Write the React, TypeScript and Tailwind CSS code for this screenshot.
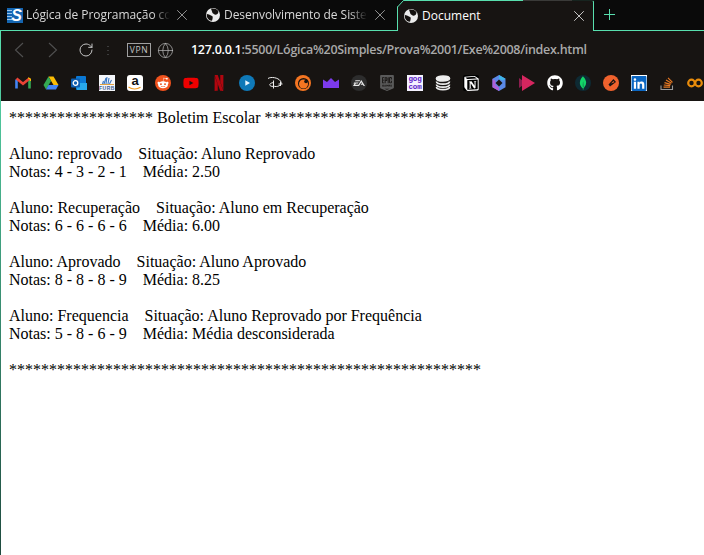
import React from "react";
import { RotateCw, Globe, X } from "lucide-react";
import { FaGithub, FaLinkedin, FaRedditAlien, FaYoutube } from "react-icons/fa";
import { SiNetflix, SiEa, SiEpicgames, SiNotion, SiMongodb } from "react-icons/si";

const Gmail = () => (
  <svg width="16" height="16" viewBox="0 0 16 16" fill="none">
    <path d="M1.500 13.500V4.500" stroke="#4285f4" strokeWidth="2.600" />
    <path d="M14.500 13.500V5" stroke="#34a853" strokeWidth="2.600" />
    <path d="M1.500 3.500L8 8.800l6.500-5.300" stroke="#ea4335" strokeWidth="2.600" />
    <path d="M13.200 2.700l2.200 1.500V6" stroke="#fbbc04" strokeWidth="1.300" />
  </svg>
);
const Drive = () => (
  <svg width="16" height="16" viewBox="0 0 16 16">
    <path d="M5.500 1.500h5L15.500 10h-5z" fill="#fbbc04" />
    <path d="M5.500 1.500L.5 10 3 14.500 8 6z" fill="#34a853" />
    <path d="M3 14.500h10l2.500-4.500H5.500z" fill="#4285f4" />
  </svg>
);
const Outlook = () => (
  <svg width="16" height="16" viewBox="0 0 16 16">
    <rect x="5" y="1" width="10" height="14" rx="1" fill="#0a78d4" />
    <path d="M5 8h11v7H6z" fill="#28a8ea" />
    <rect x="0" y="3.500" width="9" height="9" rx="1" fill="#0f5fb0" />
    <circle cx="4.500" cy="8" r="2.300" fill="none" stroke="#fff" strokeWidth="1.300" />
  </svg>
);
const Furb = () => (
  <div className="flex h-4 w-4 flex-col items-center bg-[#f4f6fa]">
    <svg width="16" height="10" viewBox="0 0 16 10">
      <path d="M5 9L7 3M7 9l1-7M9 9l1-6M10.500 9l2-4M3.500 9l1-3" stroke="#3b78c4" strokeWidth="1.100" />
      <path d="M1 9.500h14" stroke="#e0a040" strokeWidth="1" />
    </svg>
    <span className="font-['Liberation_Sans',sans-serif] text-[5px] font-bold leading-[6px] tracking-[0.5px] text-[#3a5f95]">FURB</span>
  </div>
);
const Amazon = () => (
  <div className="relative flex h-4 w-4 justify-center rounded-[3px] bg-white">
    <span className="font-['Liberation_Sans',sans-serif] text-[13px] font-bold leading-[12px] text-[#111]">a</span>
    <svg className="absolute bottom-0 left-0" width="16" height="5" viewBox="0 0 16 5" fill="none">
      <path d="M1.500 1c3.500 2.500 8.500 2.500 12 .3" stroke="#f29a1f" strokeWidth="1.300" />
    </svg>
  </div>
);
const Reddit = () => (
  <div className="flex h-4 w-4 items-center justify-center rounded-full bg-[#f0521d]">
    <FaRedditAlien className="h-3 w-3 text-white" />
  </div>
);
const Prime = () => (
  <svg width="16" height="16" viewBox="0 0 16 16">
    <circle cx="8" cy="8" r="8" fill="#0f79b8" />
    <path d="M6.300 5.300v5.400L11 8z" fill="#eaf6ff" />
  </svg>
);
const Disney = () => (
  <svg width="16" height="16" viewBox="0 0 16 16" fill="none" stroke="#eee" strokeWidth="1">
    <path d="M1 3.500C4 1.500 11 2.500 13.500 6c2 3-1 6-6 5.500" />
    <path d="M6.500 5.500v8" />
    <path d="M7 7.500c-3 .3-5 1.500-4 3 .8 1 3 1 4.500.7" />
    <path d="M11.500 9h4M13.500 7v4" />
  </svg>
);
const Crunchy = () => (
  <svg width="16" height="16" viewBox="0 0 16 16">
    <circle cx="8" cy="8" r="8" fill="#f47521" />
    <circle cx="8.500" cy="8.500" r="5.500" fill="#161311" />
    <circle cx="8.500" cy="9" r="4.500" fill="#f47521" />
    <circle cx="11" cy="6.500" r="1.800" fill="#161311" />
  </svg>
);
const Crown = () => (
  <svg width="16" height="16" viewBox="0 0 16 16">
    <path d="M0 4.500l4 2.500 4-4 4 4 4-2.500V13H0z" fill="#7c3aed" />
  </svg>
);
const Ea = () => (
  <div className="flex h-4 w-4 items-center justify-center rounded-full bg-[#2d2d2d]">
    <SiEa className="h-3 w-3 text-[#e8e8e8]" />
  </div>
);
const Gog = () => (
  <div className="flex h-4 w-4 flex-col items-center justify-center bg-[#f4f2ff] font-['Liberation_Mono',monospace] text-[7.500px] font-bold leading-[8px] tracking-[-0.200px] text-[#5a20c8]">
    <span>gog</span>
    <span>com</span>
  </div>
);
const Stack = () => (
  <svg width="16" height="16" viewBox="0 0 16 16" fill="none" stroke="#eee" strokeWidth="1.700">
    <ellipse cx="8" cy="3.500" rx="6.500" ry="2.500" fill="#eee" />
    <path d="M1.500 6.500c0 3.500 13 3.500 13 0M1.500 9.500c0 3.500 13 3.500 13 0M1.500 12c0 3.500 13 3.500 13 0" />
  </svg>
);
const Notion = () => (
  <div className="flex h-4 w-4 items-center justify-center rounded-[2px] bg-black">
    <SiNotion className="h-[15px] w-[15px] text-white" />
  </div>
);
const Copilot = () => (
  <svg width="16" height="16" viewBox="0 0 16 16">
    <path d="M8 0l6.500 3.800v8.400L8 16 1.500 12.200V3.800z" fill="#5b8ae8" />
    <path d="M8 0l6.500 3.800-3 2L8 3.800z" fill="#3fb5e8" />
    <path d="M1.500 3.800V12.200L8 16v-3.600L4.500 10V6z" fill="#b060d8" />
    <path d="M8 4.500L11.500 8 8 11.500 4.500 8z" fill="#161311" />
  </svg>
);
const Play = () => (
  <svg width="16" height="16" viewBox="0 0 16 16">
    <path d="M0 3l7 5-7 5z" fill="#8c1d4e" />
    <path d="M3 0l13 8-13 8z" fill="#d6265f" />
  </svg>
);
const Mongo = () => (
  <div className="flex h-4 w-4 items-center justify-center rounded-full bg-[#0e2a33]">
    <SiMongodb className="h-3.5 w-3.5 text-[#13d468]" />
  </div>
);
const Kite = () => (
  <svg width="16" height="16" viewBox="0 0 16 16">
    <circle cx="8" cy="8" r="8" fill="#f0622d" />
    <path d="M5.500 9.500L10.500 4l2.500 3-6 4.500z" fill="#161311" />
    <path d="M8 8.500l2.500-2.500 1 1.200z" fill="#f0622d" />
  </svg>
);
const Linkedin = () => (
  <div className="flex h-4 w-4 items-center justify-center bg-white">
    <FaLinkedin className="h-[17px] w-[17px] text-[#0a66c2]" />
  </div>
);
const StackOverflow = () => (
  <svg width="16" height="16" viewBox="0 0 16 16" fill="none">
    <path d="M2 10.500v4h11.500v-4" stroke="#9a9a9a" strokeWidth="1.100" />
    <path d="M4.500 12.200h6.500M4.800 10l6.400.6M5.500 7.600l6.200 1.700M7 5l5.500 3.200M9 2.800l4.500 4.500" stroke="#e87922" strokeWidth="1.200" />
  </svg>
);
const Infinity2 = () => (
  <svg width="16" height="16" viewBox="0 0 16 16" fill="none" stroke="#e98c0b" strokeWidth="2.200">
    <circle cx="4.500" cy="8" r="3.300" />
    <circle cx="11.500" cy="8" r="3.300" />
  </svg>
);

const icons: React.ReactNode[] = [
  <Gmail />,
  <Drive />,
  <Outlook />,
  <Furb />,
  <Amazon />,
  <Reddit />,
  <FaYoutube className="h-4 w-4 text-[#ee0000]" />,
  <SiNetflix className="h-4 w-4 text-[#b1060f]" />,
  <Prime />,
  <Disney />,
  <Crunchy />,
  <Crown />,
  <Ea />,
  <SiEpicgames className="h-4 w-4 text-[#5a5a5a]" />,
  <Gog />,
  <Stack />,
  <Notion />,
  <Copilot />,
  <Play />,
  <FaGithub className="h-4 w-4 text-white" />,
  <Mongo />,
  <Kite />,
  <Linkedin />,
  <StackOverflow />,
  <Infinity2 />,
];

const SFavicon = () => (
  <div className="relative flex h-[15px] w-4 shrink-0 items-center justify-end overflow-hidden bg-[#1565b0] pr-[1px]">
    <div className="absolute left-0 top-[2px] h-[11px] w-[5px] bg-[repeating-linear-gradient(to_bottom,#9cc4ea_0px,#9cc4ea_1px,#1565b0_1px,#1565b0_3px)]" />
    <span className="relative font-['Liberation_Sans',sans-serif] text-[16px] font-bold italic leading-[15px] text-white">S</span>
  </div>
);
const WebFavicon = () => (
  <svg className="shrink-0" width="14" height="14" viewBox="0 0 14 14">
    <circle cx="7" cy="7" r="7" fill="#ececec" />
    <path d="M5 .8C7.500.2 10.500 1 12.300 3 12.800 5 11.500 6.300 9.800 6.800 8 6.300 7.500 5.500 6.500 5 6 3.500 5.500 2 5 .8z" fill="#14110f" />
    <path d="M.8 6C2.500 6 4.500 7 6.500 8.300 7 9.500 6.500 11 6 12.800 4 12.800 2 11.500 1.200 9.500.8 8.500.7 7 .8 6z" fill="#14110f" />
  </svg>
);

const Tab = ({ title, fav, w, pl, gap, mr }: { title: string; fav: React.ReactNode; w: string; pl: string; gap: string; mr: string }) => (
  <div className={`flex h-full items-center ${w} ${pl} ${gap}`}>
    {fav}
    <span className="min-w-0 flex-1 overflow-hidden whitespace-nowrap text-[12px] tracking-[-0.05px] text-[#d8d8d8] [mask-image:linear-gradient(to_right,black_88%,transparent)]">{title}</span>
    <X className={`h-[18px] w-[18px] shrink-0 text-[#bdbdbd] ${mr}`} strokeWidth={1} />
  </div>
);

const Line = ({ children, gap }: { children: React.ReactNode; gap?: boolean }) => (
  <div className={`whitespace-pre ${gap ? "mb-[18px]" : ""}`}>{children}</div>
);

export default function App() {
  return (
    <div className="flex h-[555px] w-[704px] flex-col overflow-hidden bg-white font-['Open_Sans',sans-serif]">
      <div className="flex h-[31px] shrink-0 bg-[#0a0a0a]">
        <div className="flex w-[397px] border-b border-[#58dfae]">
          <Tab title="Lógica de Programação com" w="w-[198px]" pl="pl-[7px]" gap="gap-[3px]" mr="mr-[7px]" fav={<SFavicon />} />
          <Tab title="Desenvolvimento de Sistemas" w="w-[199px]" pl="pl-[8px]" gap="gap-[4px]" mr="mr-[8px]" fav={<WebFavicon />} />
        </div>
        <div className="relative flex w-[197px] items-center gap-[4px] rounded-tr-[2px] border-x border-t border-[#58dfae] bg-[#171412] pl-[6px]">
          <div className="absolute -top-px right-[21px] h-px w-[49px] bg-[#3a3a38]" />
          <div className="absolute -top-px -right-px h-px w-[22px] bg-[#17241f]" />
          <svg className="absolute -left-px -top-px" width="7" height="7" viewBox="0 0 7 7">
            <path d="M0 0h7L0 7z" fill="#0a0a0a" />
            <path d="M.5 7L6.500 .5H7" fill="none" stroke="#58dfae" strokeWidth="1" />
          </svg>
          <WebFavicon />
          <span className="flex-1 text-[12px] text-white">Document</span>
          <X className="mr-[5px] h-[18px] w-[18px] text-white" strokeWidth={1} />
        </div>
        <div className="flex flex-1 items-start border-b border-[#58dfae] pl-[10px] pt-[9px]">
          <svg width="11" height="11" viewBox="0 0 11 11" stroke="#58dfae" strokeWidth="1">
            <path d="M5.500 0v11M0 5.500h11" />
          </svg>
        </div>
      </div>
      <div className="flex flex-1">
        <div className="w-px shrink-0 bg-gradient-to-b from-[#58dfae] to-[#1e4a3e]" />
        <div className="flex min-w-0 flex-1 flex-col">
          <div className="flex h-[38px] shrink-0 items-center bg-[#171412] pl-[13px]">
            <svg width="10" height="16" viewBox="0 0 10 16" fill="none" stroke="#505050" strokeWidth="1.100">
              <path d="M9 1L1.500 8 9 15" />
            </svg>
            <svg className="ml-[24px]" width="10" height="16" viewBox="0 0 10 16" fill="none" stroke="#505050" strokeWidth="1.100">
              <path d="M1 1l7.500 7L1 15" />
            </svg>
            <RotateCw className="ml-[20px] h-4 w-4 text-[#c4c4c4]" strokeWidth={1.5} />
            <div className="ml-[13px] flex h-[9px] w-[2px] flex-col justify-between">
              <span className="h-px bg-[#3c3c3c]" />
              <span className="h-px bg-[#3c3c3c]" />
              <span className="h-px bg-[#3c3c3c]" />
            </div>
            <div className="ml-[18px] flex h-[14px] w-[24px] items-center justify-center border border-[#a0a0a0] text-[8.500px] leading-none tracking-[0.6px] text-[#c4c4c4]">
              VPN
            </div>
            <Globe className="ml-[6px] h-[17px] w-[17px] text-[#b8b8b8]" strokeWidth={1} />
            <div className="ml-[17px] whitespace-nowrap text-[12.500px] font-semibold tracking-[-0.3px] text-[#a9a9a9]">
              <span className="text-white">127.0.0.1</span>:5500/Lógica%20Simples/Prova%2001/Exe%2008/index.html
            </div>
          </div>
          <div className="flex h-[32px] shrink-0 items-start gap-3 bg-[#171412] pl-[14px] pt-[6px]">
            {icons.map((ic, i) => (
              <div key={i} className="flex h-4 w-4 shrink-0 items-center justify-center overflow-hidden">
                {ic}
              </div>
            ))}
          </div>
          <div className="flex-1 bg-white px-2 pt-2 font-['Liberation_Serif',serif] text-[16px] leading-[18px] text-black">
            <Line gap>{"****************** Boletim Escolar ***********************"}</Line>
            <Line>{"Aluno: reprovado\u00a0\u00a0\u00a0\u00a0Situação: Aluno Reprovado"}</Line>
            <Line gap>{"Notas: 4 - 3 - 2 - 1\u00a0\u00a0\u00a0\u00a0Média: 2.50"}</Line>
            <Line>{"Aluno: Recuperação\u00a0\u00a0\u00a0\u00a0Situação: Aluno em Recuperação"}</Line>
            <Line gap>{"Notas: 6 - 6 - 6 - 6\u00a0\u00a0\u00a0\u00a0Média: 6.00"}</Line>
            <Line>{"Aluno: Aprovado\u00a0\u00a0\u00a0\u00a0Situação: Aluno Aprovado"}</Line>
            <Line gap>{"Notas: 8 - 8 - 8 - 9\u00a0\u00a0\u00a0\u00a0Média: 8.25"}</Line>
            <Line>{"Aluno: Frequencia\u00a0\u00a0\u00a0\u00a0Situação: Aluno Reprovado por Frequência"}</Line>
            <Line gap>{"Notas: 5 - 8 - 6 - 9\u00a0\u00a0\u00a0\u00a0Média: Média desconsiderada"}</Line>
            <Line>{"***********************************************************"}</Line>
          </div>
        </div>
      </div>
    </div>
  );
}
